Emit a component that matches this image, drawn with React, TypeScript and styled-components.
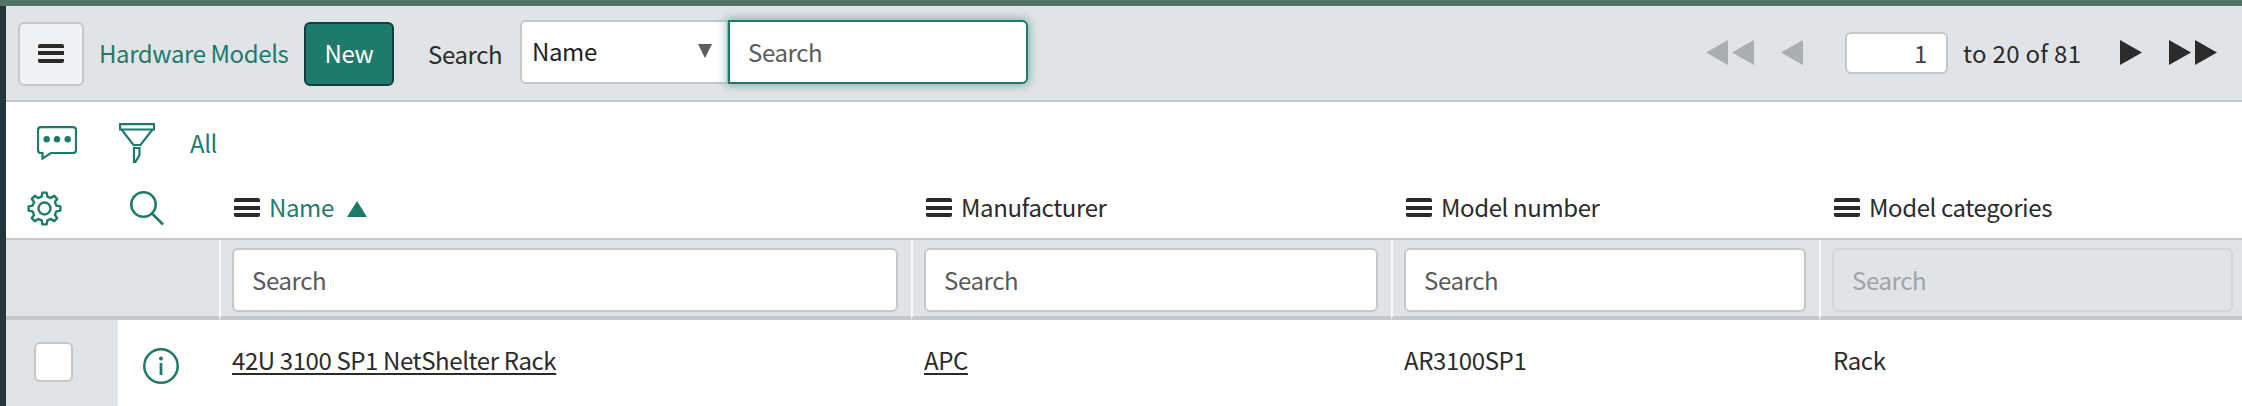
import React from "react";
import styled, { createGlobalStyle } from "styled-components";

const teal = "#1e7a6a";
const line = "#c6c7c7";
const panel = "#e1e4e7";
const ink = "#2b2b2b";

const Global = createGlobalStyle`
  html, body { margin: 0; padding: 0; background: #fff; overflow: hidden; }
  body { font-family: "Noto Sans CJK SC", "Noto Sans", sans-serif; font-size: 24px; line-height: 30px; letter-spacing: -0.4px; color: ${ink}; }
  * { box-sizing: border-box; }
`;

const Page = styled.div`
  width: 2242px;
  height: 406px;
  display: flex;
  flex-direction: column;
  overflow: hidden;
`;
const TopStrip = styled.div`
  height: 6px;
  flex: none;
  background: #527567;
`;
const Body = styled.div`
  flex: 1;
  display: flex;
  min-height: 0;
`;
const SideStrip = styled.div`
  width: 6px;
  flex: none;
  background: #22373a;
`;
const Main = styled.div`
  flex: 1;
  min-width: 0;
  display: flex;
  flex-direction: column;
`;
const Toolbar = styled.div`
  height: 96px;
  flex: none;
  display: flex;
  align-items: center;
  padding: 3px 25px 3px 12px;
  background: ${panel};
  border-top: 1px solid #e8ebed;
  border-bottom: 2px solid ${line};
`;
const MenuButton = styled.button`
  width: 66px;
  height: 64px;
  padding: 0;
  display: flex;
  align-items: center;
  justify-content: center;
  background: #f0f1f3;
  border: 2px solid ${line};
  border-radius: 6px;
`;
const Bars = styled.span`
  display: block;
  width: 26px;
  flex: none;
  height: 19px;
  background: linear-gradient(
    ${ink} 0 4px, transparent 4px 7.5px, ${ink} 7.5px 11.5px, transparent 11.5px 15px, ${ink} 15px 19px
  );
  border-radius: 2px;
`;
const Title = styled.span`
  margin-left: 15px;
  width: 190px;
  padding-bottom: 2px;
  color: ${teal};
  white-space: nowrap;
`;
const NewButton = styled.button`
  width: 90px;
  height: 64px;
  margin-left: 15px;
  padding: 0 0 2px;
  font: inherit;
  letter-spacing: inherit;
  color: #fff;
  background: ${teal};
  border: 2px solid #11403c;
  border-radius: 6px;
`;
const SearchLabel = styled.span`
  margin-left: 34px;
  width: 92px;
`;
const SelectBox = styled.div`
  width: 209px;
  height: 64px;
  margin-top: -4px;
  display: flex;
  align-items: center;
  justify-content: space-between;
  padding: 0 15px 2px 10px;
  background: #fff;
  border: 2px solid ${line};
  border-radius: 6px 0 0 6px;
  color: #222;
`;
const Caret = styled.span`
  width: 0;
  height: 0;
  border-left: 7.5px solid transparent;
  border-right: 7.5px solid transparent;
  border-top: 14px solid #5c5c5c;
`;
const MainSearch = styled.div`
  width: 300px;
  height: 64px;
  margin-top: -4px;
  margin-left: -1px;
  display: flex;
  align-items: center;
  padding: 0 0 0 18px;
  color: #5a5a5a;
  background: #fff;
  border: 2px solid ${teal};
  border-radius: 0 6px 6px 0;
  box-shadow: 0 0 9px 2px rgba(30, 122, 106, 0.45);
`;
const Pager = styled.div`
  margin-left: auto;
  margin-top: -2px;
  display: flex;
  align-items: center;
`;
const PagerArrows = styled.svg<{ $w: number; $gap?: number }>`
  display: block;
  flex: none;
  width: ${(p) => p.$w}px;
  height: 25px;
  margin-left: ${(p) => p.$gap ?? 0}px;
`;
const PageInput = styled.div`
  width: 103px;
  height: 42px;
  margin: 0 15px 0 42px;
  padding-right: 19px;
  text-align: right;
  line-height: 38px;
  color: #37414d;
  background: #fff;
  border: 2px solid ${line};
  border-radius: 6px;
`;
const PageText = styled.span`
  width: 116px;
  letter-spacing: 0.3px;
  white-space: nowrap;
  margin-right: 41px;
`;
const IconRow = styled.div`
  height: 82px;
  flex: none;
  display: flex;
  align-items: center;
  padding: 0 0 0 31px;
`;
const Glyph = styled.svg<{ $w: number; $h: number; $gap?: number }>`
  display: block;
  flex: none;
  width: ${(p) => p.$w}px;
  height: ${(p) => p.$h}px;
  margin-left: ${(p) => p.$gap ?? 0}px;
`;
const AllLink = styled.span`
  margin-left: 35px;
  color: ${teal};
`;
const Table = styled.div`
  display: grid;
  grid-template-columns: 112px 101px 692px 480px 428px 1fr;
`;
const HeadIconCell = styled.div<{ $pad: number }>`
  height: 56px;
  display: flex;
  align-items: center;
  padding: 0 0 5px ${(p) => p.$pad}px;
  border-bottom: 2px solid ${line};
`;
const HeadCell = styled.div<{ $active?: boolean }>`
  height: 56px;
  display: flex;
  align-items: center;
  gap: 9px;
  padding: 0 0 8px 15px;
  color: ${(p) => (p.$active ? teal : ink)};
  border-bottom: 2px solid ${line};
`;
const SortUp = styled.span`
  width: 0;
  height: 0;
  margin: 3px 0 0 4px;
  border-left: 10px solid transparent;
  border-right: 10px solid transparent;
  border-bottom: 16px solid ${teal};
`;
const FilterGap = styled.div`
  height: 80px;
  background: ${panel};
  border-bottom: 4px solid ${line};
`;
const FilterCell = styled.div<{ $right?: number }>`
  height: 80px;
  padding: 8px ${(p) => p.$right ?? 13}px 4px 11px;
  background: ${panel};
  border-left: 2px solid #fafbfb;
  border-bottom: 4px solid ${line};
`;
const FilterInput = styled.div<{ $disabled?: boolean }>`
  height: 64px;
  display: flex;
  align-items: center;
  padding: 0 0 0 18px;
  color: ${(p) => (p.$disabled ? "#a0a3a5" : "#5a5a5a")};
  background: ${(p) => (p.$disabled ? panel : "#fff")};
  border: 2px solid ${(p) => (p.$disabled ? "#d3d6d8" : line)};
  border-radius: 6px;
`;
const SelectCell = styled.div`
  height: 86px;
  display: flex;
  align-items: center;
  padding: 0 0 2px 28px;
  background: ${panel};
`;
const Checkbox = styled.span`
  display: block;
  width: 39px;
  height: 40px;
  background: #fff;
  border: 2px solid ${line};
  border-radius: 6px;
`;
const InfoCell = styled.div`
  height: 86px;
  display: flex;
  align-items: center;
  padding: 6px 0 0 25px;
`;
const DataCell = styled.div<{ $pad?: number }>`
  height: 86px;
  display: flex;
  align-items: center;
  padding: 0 0 6px ${(p) => p.$pad ?? 13}px;
  white-space: nowrap;
`;
const RecordLink = styled.a`
  color: ${ink};
  text-decoration: underline;
  text-underline-offset: 3px;
  text-decoration-thickness: 2px;
`;

const Left = ({ x = 0 }: { x?: number }) => <polygon points={`${x + 22},0 ${x + 22},25 ${x},12.5`} />;
const Right = ({ x = 0 }: { x?: number }) => <polygon points={`${x},0 ${x},25 ${x + 22},12.5`} />;

const gearPath = (() => {
  const cx = 17.5, cy = 17.5, outer = 16, inner = 12.2, teeth = 8;
  const step = (2 * Math.PI) / teeth;
  const pts: string[] = [];
  for (let i = 0; i < teeth; i++) {
    const a = i * step - Math.PI / 2;
    const add = (r: number, off: number) =>
      pts.push(`${(cx + r * Math.cos(a + off * step)).toFixed(2)} ${(cy + r * Math.sin(a + off * step)).toFixed(2)}`);
    add(inner, -0.3);
    add(outer, -0.17);
    add(outer, 0.17);
    add(inner, 0.3);
  }
  return "M" + pts.join("L") + "Z";
})();

const CommentIcon = () => (
  <Glyph $w={40} $h={34} viewBox="0 0 40 34" fill="none" stroke={teal} strokeWidth="2.2">
    <path d="M4 1.2H36Q39 1.2 39 4V24Q39 27 36 27H14L5.5 32.5V27H4Q1 27 1 24V4Q1 1.2 4 1.2Z" />
    <g fill={teal} stroke="none">
      <circle cx="9.7" cy="13.3" r="3.2" />
      <circle cx="20" cy="13.3" r="3.2" />
      <circle cx="30.7" cy="13.3" r="3.2" />
    </g>
  </Glyph>
);
const FunnelIcon = () => (
  <Glyph $w={36} $h={40} $gap={42} viewBox="0 0 36 40" fill="none" stroke={teal} strokeWidth="2.2">
    <path d="M1 1.2H35V6.5H1Z" />
    <path d="M2.5 6.5L14.5 22H21.5L33.5 6.5" />
    <path d="M15 25H20.5V32L16.5 38.8H15Z" />
  </Glyph>
);
const GearIcon = () => (
  <Glyph $w={35} $h={35} viewBox="0 0 35 35" fill="none" stroke={teal} strokeWidth="2.4" strokeLinejoin="round">
    <path d={gearPath} />
    <circle cx="17.5" cy="17.5" r="6" />
  </Glyph>
);
const SearchIcon = () => (
  <Glyph $w={34} $h={35} viewBox="0 0 34 35" fill="none" stroke={teal} strokeWidth="2.6">
    <circle cx="13.5" cy="13.5" r="12.2" />
    <path d="M22.5 23L33 33.5" />
  </Glyph>
);
const InfoIcon = () => (
  <Glyph $w={36} $h={36} viewBox="0 0 36 36" fill="none" stroke={teal} strokeWidth="2.5">
    <circle cx="18" cy="18" r="16.7" />
    <path d="M18 15V27" strokeWidth="2.8" />
    <circle cx="18" cy="10.5" r="2" fill={teal} stroke="none" />
  </Glyph>
);

export default function App() {
  return (
    <Page>
      <Global />
      <TopStrip />
      <Body>
        <SideStrip />
        <Main>
          <Toolbar>
            <MenuButton><Bars /></MenuButton>
            <Title>Hardware Models</Title>
            <NewButton>New</NewButton>
            <SearchLabel>Search</SearchLabel>
            <SelectBox>Name<Caret /></SelectBox>
            <MainSearch>Search</MainSearch>
            <Pager>
              <PagerArrows $w={48} viewBox="0 0 48 25" fill="#a9aeaf"><Left x={0} /><Left x={26} /></PagerArrows>
              <PagerArrows $w={22} $gap={27} viewBox="0 0 22 25" fill="#a9aeaf"><Left /></PagerArrows>
              <PageInput>1</PageInput>
              <PageText>to 20 of 81</PageText>
              <PagerArrows $w={22} viewBox="0 0 22 25" fill={ink}><Right /></PagerArrows>
              <PagerArrows $w={48} $gap={27} viewBox="0 0 48 25" fill={ink}><Right x={0} /><Right x={26} /></PagerArrows>
            </Pager>
          </Toolbar>
          <IconRow>
            <CommentIcon />
            <FunnelIcon />
            <AllLink>All</AllLink>
          </IconRow>
          <Table>
            <HeadIconCell $pad={21}><GearIcon /></HeadIconCell>
            <HeadIconCell $pad={12}><SearchIcon /></HeadIconCell>
            <HeadCell $active><Bars />Name<SortUp /></HeadCell>
            <HeadCell><Bars />Manufacturer</HeadCell>
            <HeadCell><Bars />Model number</HeadCell>
            <HeadCell><Bars />Model categories</HeadCell>

            <FilterGap />
            <FilterGap />
            <FilterCell><FilterInput>Search</FilterInput></FilterCell>
            <FilterCell><FilterInput>Search</FilterInput></FilterCell>
            <FilterCell><FilterInput>Search</FilterInput></FilterCell>
            <FilterCell $right={9}><FilterInput $disabled>Search</FilterInput></FilterCell>

            <SelectCell><Checkbox /></SelectCell>
            <InfoCell><InfoIcon /></InfoCell>
            <DataCell><RecordLink>42U 3100 SP1 NetShelter Rack</RecordLink></DataCell>
            <DataCell><RecordLink>APC</RecordLink></DataCell>
            <DataCell>AR3100SP1</DataCell>
            <DataCell $pad={14}>Rack</DataCell>
          </Table>
        </Main>
      </Body>
    </Page>
  );
}
